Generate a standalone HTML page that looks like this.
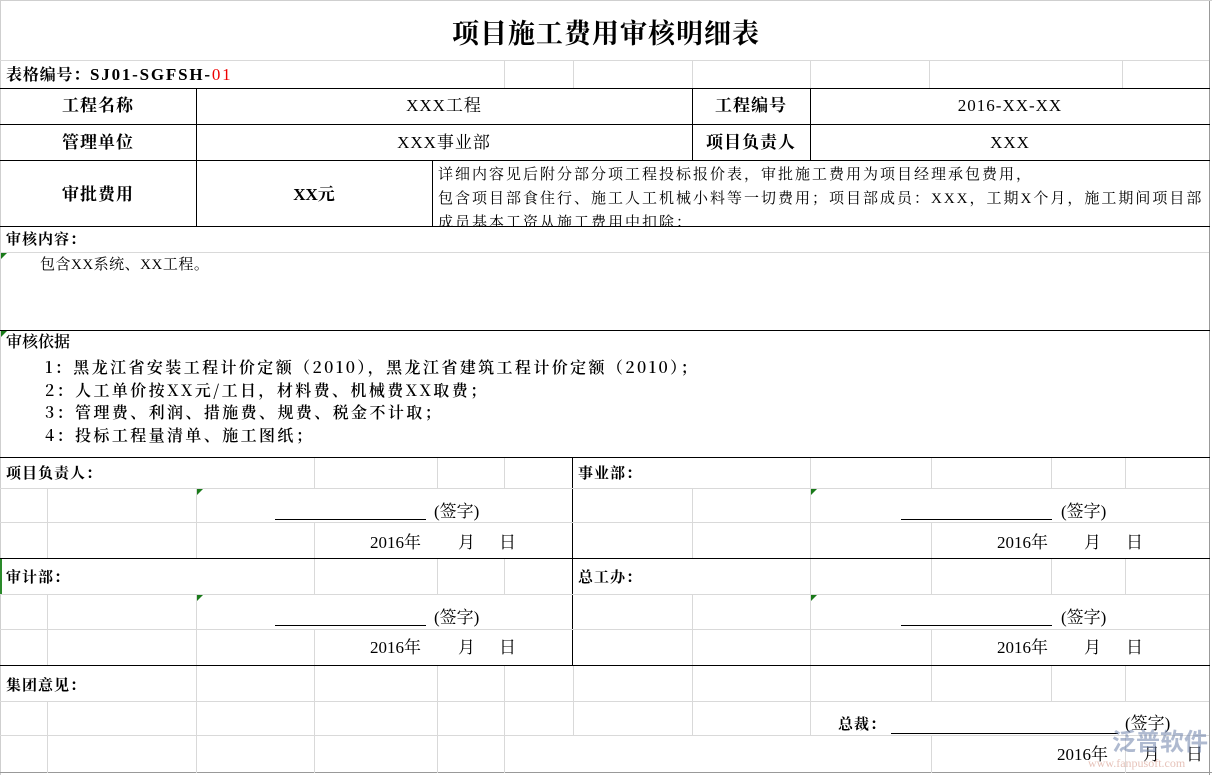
<!DOCTYPE html>
<html><head><meta charset="utf-8"><style>
*{margin:0;padding:0;box-sizing:border-box}
body{width:1212px;height:775px;background:#fff;position:relative;overflow:hidden;font-family:"Liberation Serif","Noto Serif CJK SC",serif;color:#000}
.h{position:absolute;height:1px;background:#d9d9d9}
.v{position:absolute;width:1px;background:#d9d9d9}
.H{position:absolute;height:1px;background:#000}
.V{position:absolute;width:1px;background:#000}
.t{position:absolute;white-space:nowrap;line-height:1}
.b{font-weight:bold}
.c{text-align:center}
.s{font-family:"Liberation Sans","Noto Sans CJK SC",sans-serif}
.g{position:absolute;width:0;height:0;border-top:6px solid #1a7a1a;border-right:6px solid transparent}
.d{position:absolute;white-space:nowrap;line-height:1;font-size:17px}
</style></head><body>
<div class="v" style="left:0;top:0;height:775px;background:#cfcfcf"></div>
<div class="v" style="left:1209px;top:0;height:775px;background:#999"></div>
<div class="h" style="left:0;top:0;width:1212px;background:#cfcfcf"></div>
<div class="h" style="left:0;top:772px;width:1212px;background:#999"></div>
<div class="h" style="left:0;top:60px;width:1209px"></div>

<div class="t b c" style="left:0;width:1212px;top:21px;font-size:27px;letter-spacing:1px">项目施工费用审核明细表</div>

<div class="v" style="left:504px;top:60px;height:28px"></div>
<div class="v" style="left:573px;top:60px;height:28px"></div>
<div class="v" style="left:692px;top:60px;height:28px"></div>
<div class="v" style="left:810px;top:60px;height:28px"></div>
<div class="v" style="left:929px;top:60px;height:28px"></div>
<div class="v" style="left:1122px;top:60px;height:28px"></div>
<div class="t b" style="left:6px;top:66px;font-size:16px;letter-spacing:0.8px">表格编号：<span style="font-size:17px;letter-spacing:1.8px">SJ01-SGFSH-</span><span style="color:#e00;font-weight:normal;font-size:17px;letter-spacing:1.8px">01</span></div>

<div class="H" style="left:0;top:88px;width:1210px"></div>
<div class="H" style="left:0;top:124px;width:1210px"></div>
<div class="H" style="left:0;top:160px;width:1210px"></div>
<div class="H" style="left:0;top:226px;width:1210px"></div>
<div class="H" style="left:0;top:330px;width:1210px"></div>
<div class="H" style="left:0;top:457px;width:1210px"></div>
<div class="H" style="left:0;top:558px;width:1210px"></div>
<div class="H" style="left:0;top:665px;width:1210px"></div>
<div class="V" style="left:196px;top:88px;height:138px"></div>
<div class="V" style="left:432px;top:160px;height:66px"></div>
<div class="V" style="left:692px;top:88px;height:72px"></div>
<div class="V" style="left:810px;top:88px;height:72px"></div>
<div class="V" style="left:572px;top:457px;height:208px"></div>

<div class="t b c" style="left:0;width:196px;top:97px;font-size:17px;letter-spacing:1px">工程名称</div>
<div class="t c" style="left:196px;width:496px;top:97px;font-size:17px;letter-spacing:1px">XXX工程</div>
<div class="t b c" style="left:692px;width:118px;top:97px;font-size:17px;letter-spacing:1px">工程编号</div>
<div class="t c" style="left:810px;width:400px;top:97px;font-size:17px;letter-spacing:1px">2016-XX-XX</div>
<div class="t b c" style="left:0;width:196px;top:134px;font-size:17px;letter-spacing:1px">管理单位</div>
<div class="t c" style="left:196px;width:496px;top:134px;font-size:17px;letter-spacing:1px">XXX事业部</div>
<div class="t b c" style="left:692px;width:118px;top:134px;font-size:17px;letter-spacing:1px">项目负责人</div>
<div class="t c" style="left:810px;width:400px;top:134px;font-size:17px;letter-spacing:1px">XXX</div>
<div class="t b c" style="left:0;width:196px;top:186px;font-size:17px;letter-spacing:1px">审批费用</div>
<div class="t b c" style="left:196px;width:236px;top:186px;font-size:17px">XX元</div>
<div style="position:absolute;left:438px;top:161px;width:770px;height:65px;overflow:hidden;font-size:15px;line-height:24px;letter-spacing:2px;white-space:nowrap;padding-top:2px">详细内容见后附分部分项工程投标报价表，审批施工费用为项目经理承包费用，<br>包含项目部食住行、施工人工机械小料等一切费用；项目部成员：XXX，工期X个月，施工期间项目部<br>成员基本工资从施工费用中扣除；</div>

<div class="t b" style="left:6px;top:233px;font-size:15px;letter-spacing:1px">审核内容：</div>
<div class="h" style="left:0;top:252px;width:1209px"></div>
<div class="g" style="left:1px;top:253px"></div>
<div class="t" style="left:40px;top:258px;font-size:15px;letter-spacing:0.5px">包含XX系统、XX工程。</div>

<div class="g" style="left:1px;top:331px"></div>
<div class="t" style="left:6px;top:335px;font-size:16px;font-weight:600">审核依据</div>
<div class="t" style="left:45px;top:356px;font-size:16px;line-height:22.5px;font-weight:600;letter-spacing:2.4px;font-family:'Noto Serif CJK SC',serif">1：黑龙江省安装工程计价定额（2010），黑龙江省建筑工程计价定额（2010）；<br>2：人工单价按XX元/工日，材料费、机械费XX取费；<br>3：管理费、利润、措施费、规费、税金不计取；<br>4：投标工程量清单、施工图纸；</div>

<div class="h" style="left:0;top:488px;width:1209px"></div>
<div class="h" style="left:0;top:522px;width:1209px"></div>
<div class="h" style="left:0;top:594px;width:1209px"></div>
<div class="h" style="left:0;top:629px;width:1209px"></div>
<div class="h" style="left:0;top:701px;width:1209px"></div>
<div class="h" style="left:0;top:735px;width:1209px"></div>
<div class="v" style="left:314px;top:458px;height:30px"></div>
<div class="v" style="left:437px;top:458px;height:30px"></div>
<div class="v" style="left:504px;top:458px;height:30px"></div>
<div class="v" style="left:47px;top:488px;height:70px"></div>
<div class="v" style="left:196px;top:488px;height:70px"></div>
<div class="v" style="left:314px;top:522px;height:36px"></div>
<div class="v" style="left:314px;top:559px;height:35px"></div>
<div class="v" style="left:437px;top:559px;height:35px"></div>
<div class="v" style="left:504px;top:559px;height:35px"></div>
<div class="v" style="left:47px;top:594px;height:71px"></div>
<div class="v" style="left:196px;top:594px;height:71px"></div>
<div class="v" style="left:314px;top:629px;height:36px"></div>
<div class="v" style="left:692px;top:488px;height:70px"></div>
<div class="v" style="left:810px;top:458px;height:100px"></div>
<div class="v" style="left:931px;top:458px;height:30px"></div>
<div class="v" style="left:931px;top:522px;height:36px"></div>
<div class="v" style="left:1051px;top:458px;height:30px"></div>
<div class="v" style="left:1125px;top:458px;height:30px"></div>
<div class="v" style="left:692px;top:594px;height:71px"></div>
<div class="v" style="left:810px;top:559px;height:106px"></div>
<div class="v" style="left:931px;top:559px;height:35px"></div>
<div class="v" style="left:931px;top:629px;height:36px"></div>
<div class="v" style="left:1051px;top:559px;height:35px"></div>
<div class="v" style="left:1125px;top:559px;height:35px"></div>
<div class="v" style="left:47px;top:701px;height:72px"></div>
<div class="v" style="left:196px;top:666px;height:107px"></div>
<div class="v" style="left:314px;top:666px;height:107px"></div>
<div class="v" style="left:437px;top:666px;height:107px"></div>
<div class="v" style="left:504px;top:666px;height:107px"></div>
<div class="v" style="left:573px;top:666px;height:69px"></div>
<div class="v" style="left:692px;top:666px;height:69px"></div>
<div class="v" style="left:810px;top:666px;height:69px"></div>
<div class="v" style="left:931px;top:666px;height:35px"></div>
<div class="v" style="left:931px;top:735px;height:38px"></div>
<div class="v" style="left:1051px;top:666px;height:35px"></div>
<div class="v" style="left:1125px;top:666px;height:35px"></div>
<div class="v" style="left:1125px;top:735px;height:38px"></div>
<div class="g" style="left:197px;top:489px"></div>
<div class="g" style="left:811px;top:489px"></div>
<div class="g" style="left:197px;top:595px"></div>
<div class="g" style="left:811px;top:595px"></div>
<div style="position:absolute;left:0;top:559px;width:2px;height:35px;background:#2a8a2a"></div>

<div class="t b" style="left:6px;top:467px;font-size:15px;letter-spacing:1px">项目负责人：</div>
<div class="t b" style="left:578px;top:467px;font-size:15px;letter-spacing:1px">事业部：</div>
<div class="t b" style="left:6px;top:571px;font-size:15px;letter-spacing:1px">审计部：</div>
<div class="t b" style="left:578px;top:571px;font-size:15px;letter-spacing:1px">总工办：</div>
<div class="t b" style="left:6px;top:679px;font-size:15px;letter-spacing:1px">集团意见：</div>

<div class="H" style="left:275px;top:519px;width:151px"></div>
<div class="d" style="left:434px;top:503px">(签字)</div>
<div class="d" style="left:370px;top:534px">2016年</div><div class="d" style="left:458px;top:534px">月</div><div class="d" style="left:499px;top:534px">日</div>
<div class="H" style="left:901px;top:519px;width:151px"></div>
<div class="d" style="left:1061px;top:503px">(签字)</div>
<div class="d" style="left:997px;top:534px">2016年</div><div class="d" style="left:1084px;top:534px">月</div><div class="d" style="left:1126px;top:534px">日</div>

<div class="H" style="left:275px;top:625px;width:151px"></div>
<div class="d" style="left:434px;top:609px">(签字)</div>
<div class="d" style="left:370px;top:639px">2016年</div><div class="d" style="left:458px;top:639px">月</div><div class="d" style="left:499px;top:639px">日</div>
<div class="H" style="left:901px;top:625px;width:151px"></div>
<div class="d" style="left:1061px;top:609px">(签字)</div>
<div class="d" style="left:997px;top:639px">2016年</div><div class="d" style="left:1084px;top:639px">月</div><div class="d" style="left:1126px;top:639px">日</div>

<div class="t b" style="left:838px;top:718px;font-size:15px;letter-spacing:1px">总裁：</div>
<div class="H" style="left:891px;top:733px;width:227px"></div>
<div class="d" style="left:1125px;top:715px">(签字)</div>
<div class="d" style="left:1057px;top:746px">2016年</div><div class="d" style="left:1143px;top:746px">月</div><div class="d" style="left:1186px;top:746px">日</div>

<div class="t s" style="left:1112px;top:731px;font-size:24px;color:rgba(110,130,170,0.55);font-weight:bold">泛普软件</div>
<div class="t" style="left:1088px;top:757px;font-size:12px;color:rgba(200,120,100,0.45)">www.fanpusoft.com</div>
</body></html>
